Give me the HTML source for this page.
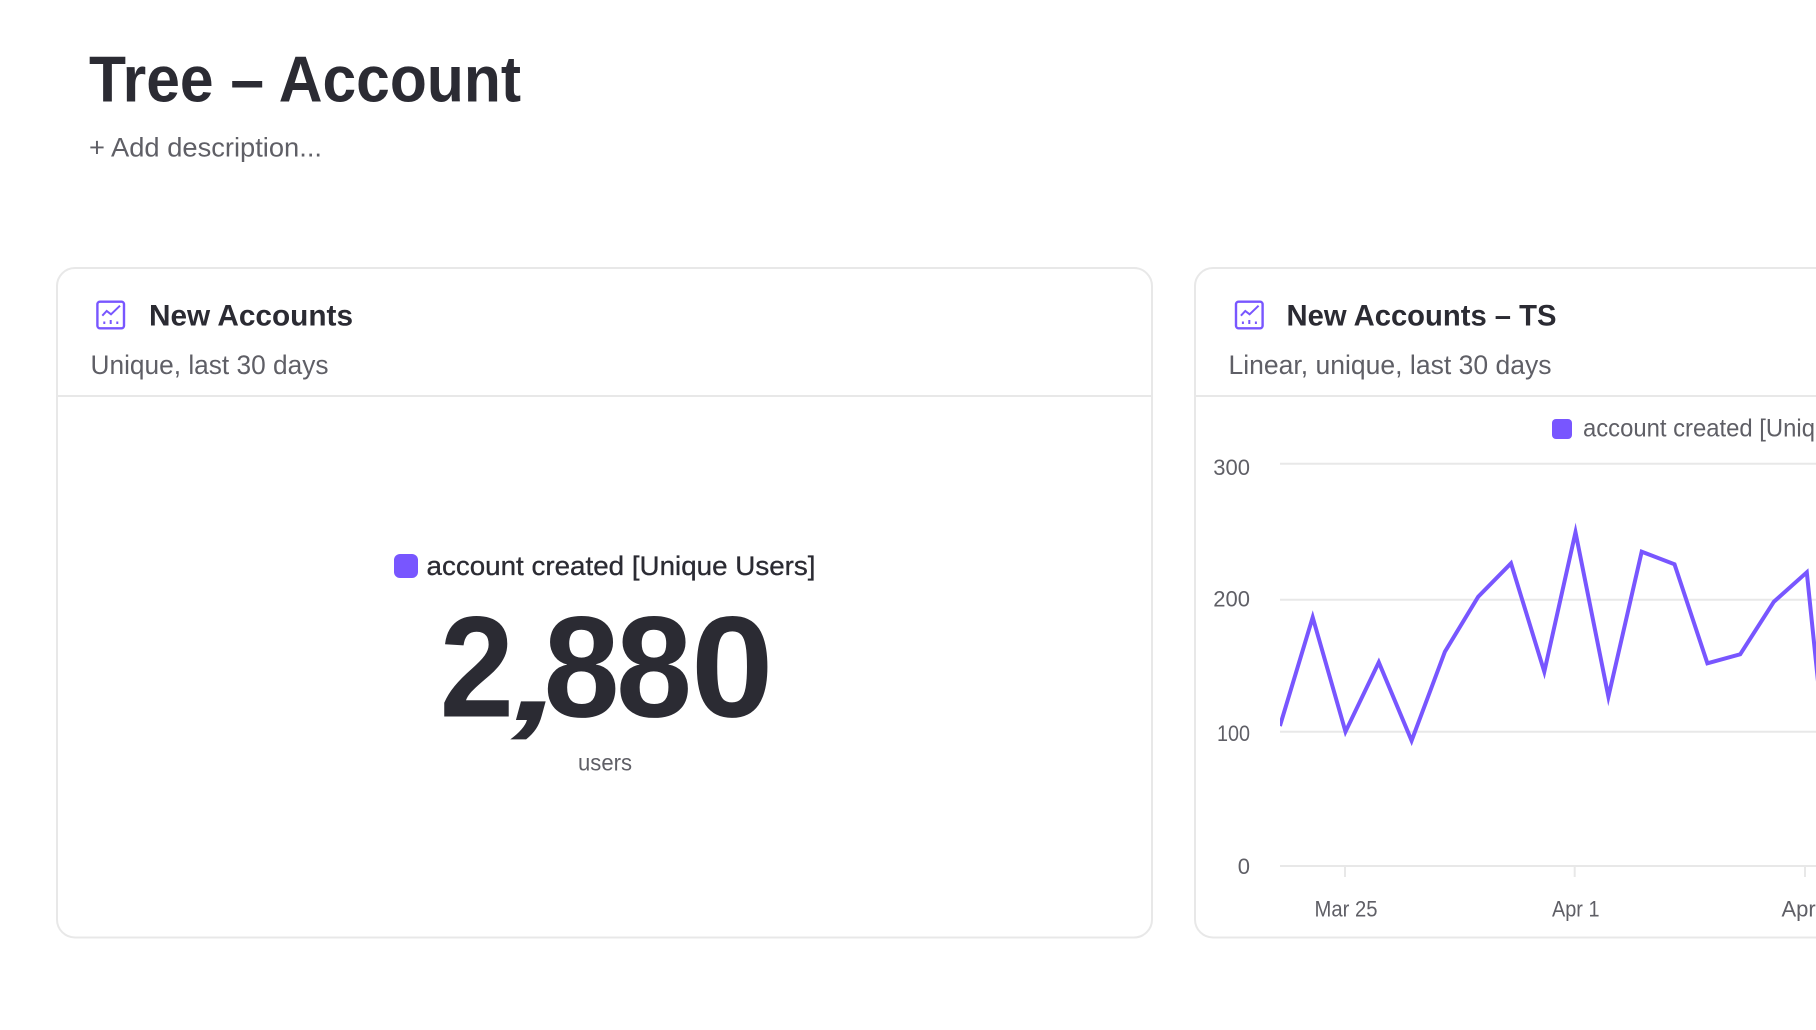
<!DOCTYPE html>
<html lang="en"><head><meta charset="utf-8"><title>Tree - Account</title>
<style>
html,body{margin:0;padding:0;background:#fff;width:1816px;height:1030px;overflow:hidden}
svg{display:block}
text{font-family:"Liberation Sans",sans-serif;white-space:pre}
.d{fill:#2b2b33;font-weight:700}
.g{fill:#5f5f66}
.m{fill:#5f5f66;font-size:22px}
</style></head>
<body>
<svg width="1816" height="1030" viewBox="0 0 1816 1030" xmlns="http://www.w3.org/2000/svg">
<text class="d" x="89" y="101.5" font-size="65" textLength="432" lengthAdjust="spacingAndGlyphs">Tree – Account</text>
<text class="g" x="89" y="156.5" font-size="27" textLength="233" lengthAdjust="spacingAndGlyphs">+ Add description...</text>

<rect x="57" y="268" width="1095" height="669.5" rx="18" fill="#fff" stroke="#e8e8e8" stroke-width="2"/>
<line x1="57" y1="396" x2="1152" y2="396" stroke="#e8e8e8" stroke-width="2"/>
<g fill="none" stroke="#7856ff">
<rect x="97.4" y="301.7" width="26.6" height="26.6" rx="2.5" stroke-width="2.4"/>
<path d="M102.3 315.7L106.7 311L111 314.3L120 305.7" stroke-width="2"/>
<path d="M104.3 321.5v2.5M110.7 320v4M117.3 321.5v2.5" stroke-width="2"/>
</g>
<text class="d" x="149" y="325.5" font-size="30" textLength="204" lengthAdjust="spacingAndGlyphs">New Accounts</text>
<text class="g" x="90.5" y="374" font-size="27" textLength="238" lengthAdjust="spacingAndGlyphs">Unique, last 30 days</text>

<rect x="394" y="554" width="24" height="24" rx="6" fill="#7856ff"/>
<text x="426.5" y="575" font-size="27" fill="#2b2b33" stroke="#2b2b33" stroke-width=".3" textLength="389" lengthAdjust="spacingAndGlyphs">account created [Unique Users]</text>
<text class="d" font-size="144" transform="translate(439.6 716.5) scale(.93 1)">2</text>
<text class="d" font-size="125" font-style="italic" transform="translate(512 720) scale(1.4 1)">,</text>
<text class="d" font-size="144" transform="translate(543.5 716.5) scale(.95 1)">8</text>
<text class="d" font-size="144" transform="translate(616 716.5) scale(.95 1)">8</text>
<text class="d" font-size="144" transform="translate(691 716.5) scale(1.03 1)">0</text>
<text class="g" x="578" y="770.5" font-size="23" textLength="54" lengthAdjust="spacingAndGlyphs">users</text>

<rect x="1195" y="268" width="900" height="669.5" rx="18" fill="#fff" stroke="#e8e8e8" stroke-width="2"/>
<line x1="1195" y1="396" x2="1816" y2="396" stroke="#e8e8e8" stroke-width="2"/>
<g fill="none" stroke="#7856ff">
<rect x="1236" y="301.7" width="26.6" height="26.6" rx="2.5" stroke-width="2.4"/>
<path d="M1240.9 315.7L1245.3 311L1249.6 314.3L1258.6 305.7" stroke-width="2"/>
<path d="M1242.9 321.5v2.5M1249.3 320v4M1255.9 321.5v2.5" stroke-width="2"/>
</g>
<text class="d" x="1286.5" y="325.5" font-size="30" textLength="270" lengthAdjust="spacingAndGlyphs">New Accounts – TS</text>
<text class="g" x="1228.5" y="374" font-size="27" textLength="323" lengthAdjust="spacingAndGlyphs">Linear, unique, last 30 days</text>

<rect x="1552" y="419" width="20" height="20" rx="4" fill="#7856ff"/>
<text class="g" x="1583" y="436.5" font-size="25" textLength="334" lengthAdjust="spacingAndGlyphs">account created [Unique Users]</text>

<g stroke="#e8e8e8" stroke-width="2" fill="none">
<path d="M1280 463.7H1816M1280 599.7H1816M1280 731.7H1816M1280 866H1816"/>
<path d="M1345 866V877M1574.7 866V877M1805 866V877"/>
</g>
<text class="m" x="1250" y="475" text-anchor="end">300</text>
<text class="m" x="1250" y="606.7" text-anchor="end">200</text>
<text class="m" x="1250" y="741" text-anchor="end" textLength="33" lengthAdjust="spacingAndGlyphs">100</text>
<text class="m" x="1250" y="874" text-anchor="end">0</text>
<text class="m" x="1314.5" y="916.7" font-size="21" textLength="63" lengthAdjust="spacingAndGlyphs">Mar 25</text>
<text class="m" x="1552" y="916.7" textLength="47.5" lengthAdjust="spacingAndGlyphs">Apr 1</text>
<text class="m" x="1781.5" y="916.7">Apr 8</text>

<svg x="1280" y="400" width="536" height="600" viewBox="1280 400 536 600" overflow="hidden">
<polyline fill="none" stroke="#7856ff" stroke-width="4" stroke-linejoin="miter" stroke-miterlimit="10" points="1279.9,726 1312.7,617.3 1345.5,731.7 1378.8,662.3 1411.6,740.7 1444.9,651.7 1478.2,596.7 1511,563.3 1544.3,671.7 1575.5,532.3 1608.4,696.7 1641.7,551.7 1674.5,564.3 1707.4,663.3 1740.2,654.3 1773.9,601.7 1806.8,572.3 1820,701"/>
</svg>
</svg>
</body></html>
